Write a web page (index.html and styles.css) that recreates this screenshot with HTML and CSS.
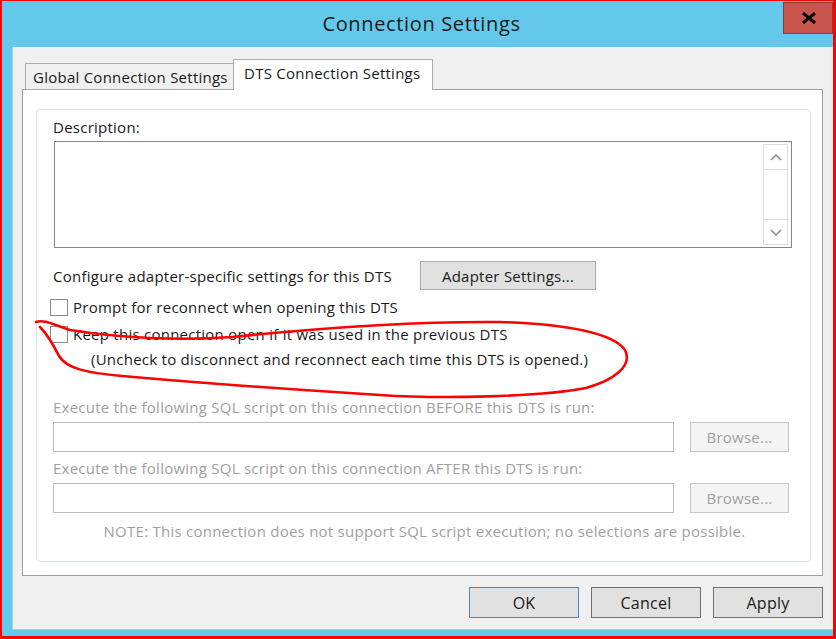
FILE: index.html
```html
<!DOCTYPE html>
<html>
<head>
<meta charset="utf-8">
<link rel="stylesheet" href="styles.css">
</head>
<body>
<div class="screen">
  <div class="titlebar">
    <div></div>
    <div class="title">Connection Settings</div>
    <div class="close-wrap">
      <div class="close">
        <svg width="16" height="12" viewBox="0 0 16 12"><path d="M2 1 L14 11 M14 1 L2 11" stroke="#000" stroke-width="3" stroke-linecap="butt"/></svg>
      </div>
    </div>
  </div>
  <div class="client">
    <div class="tabs">
      <div class="tab inactive">Global Connection Settings</div>
      <div class="tab active">DTS Connection Settings</div>
    </div>
    <div class="page">
      <div class="group">
        <div class="label desc">Description:</div>
        <div class="textarea">
          <div class="scrollbar">
            <div class="sb-btn">
              <svg width="12" height="7" viewBox="0 0 12 7"><path d="M1 6 L6 1 L11 6" fill="none" stroke="#8a8a8a" stroke-width="1.5"/></svg>
            </div>
            <div class="sb-track"></div>
            <div class="sb-btn">
              <svg width="12" height="7" viewBox="0 0 12 7"><path d="M1 1 L6 6 L11 1" fill="none" stroke="#8a8a8a" stroke-width="1.5"/></svg>
            </div>
          </div>
        </div>
        <div class="adapter-row">
          <div class="label">Configure adapter-specific settings for this DTS</div>
          <div class="btn adapter">Adapter Settings...</div>
        </div>
        <div class="check-row first">
          <div class="box"></div>
          <div class="label">Prompt for reconnect when opening this DTS</div>
        </div>
        <div class="check-row second">
          <div class="box"></div>
          <div class="label">Keep this connection open if it was used in the previous DTS</div>
        </div>
        <div class="label hint">(Uncheck to disconnect and reconnect each time this DTS is opened.)</div>
        <div class="label disabled before">Execute the following SQL script on this connection BEFORE this DTS is run:</div>
        <div class="sql-row">
          <div class="input"></div>
          <div class="btn browse">Browse...</div>
        </div>
        <div class="label disabled after">Execute the following SQL script on this connection AFTER this DTS is run:</div>
        <div class="sql-row">
          <div class="input"></div>
          <div class="btn browse">Browse...</div>
        </div>
        <div class="label disabled note">NOTE: This connection does not support SQL script execution; no selections are possible.</div>
      </div>
    </div>
    <div class="buttons">
      <div class="btn dlg ok">OK</div>
      <div class="btn dlg">Cancel</div>
      <div class="btn dlg">Apply</div>
    </div>
  </div>
  <svg class="scribble" width="836" height="639" viewBox="0 0 836 639">
    <path d="M36 322 C44 319 54 325 70 330 C120 338 180 341 232 337 C300 330 400 321 500 322 C570 324 614 334 625 350 C633 366 614 380 586 388 C540 397 440 399 380 395 C300 390 200 383 122 376 C86 373 66 368 59 356 C53 344 47 334 40 327" fill="none" stroke="#ff0000" stroke-width="2.6" stroke-linecap="round"/>
  </svg>
</div>
</body>
</html>
```
FILE: styles.css
```css
* { box-sizing: border-box; }
html, body { margin: 0; padding: 0; }
body {
  width: 836px;
  height: 639px;
  overflow: hidden;
  font-family: "Open Sans", "Noto Sans", sans-serif;
  font-size: 15px;
  letter-spacing: 0.25px;
  color: #1a1a1a;
}
.screen {
  position: relative;
  width: 836px;
  height: 639px;
  border-style: solid;
  border-color: #ff0000;
  border-width: 1px 3px 3px 2px;
  background: #63c8e9;
  display: flex;
  flex-direction: column;
}
.titlebar {
  height: 46px;
  display: grid;
  grid-template-columns: 1fr auto 1fr;
  align-items: start;
}
.title {
  font-size: 20px;
  letter-spacing: 0.65px;
  color: #1b1b1b;
  line-height: 26px;
  margin-top: 10px;
  padding-left: 8px;
}
.close-wrap { display: flex; justify-content: flex-end; }
.close {
  width: 50px;
  height: 32px;
  margin-top: 1px;
  margin-right: 0;
  background: #c8564d;
  border: 1px solid #8d3d37;
  display: flex;
  align-items: center;
  justify-content: center;
  padding-left: 1px;
}
.client {
  margin: 0 0 6px 10px;
  flex: 1;
  background: #f0f0f0;
  border-left: 1px solid #a9cfdc;
  border-bottom: 1px solid #a9cfdc;
  display: flex;
  flex-direction: column;
  padding: 12px 10px 0 9px;
}
.tabs {
  display: flex;
  align-items: flex-end;
  padding-left: 3px;
  height: 31px;
  position: relative;
  z-index: 1;
  margin-bottom: -1px;
}
.tab {
  border: 1px solid #adadad;
  border-bottom: none;
  white-space: nowrap;
}
.tab.inactive {
  height: 27px;
  width: 208px;
  background: #f0f0f0;
  padding-left: 7px;
  line-height: 27px;
  border-right: none;
  border-bottom: 1px solid #adadad;
}
.tab.active {
  height: 31px;
  width: 200px;
  background: #ffffff;
  padding-left: 10px;
  line-height: 27px;
}
.page {
  height: 487px;
  background: #ffffff;
  border: 1px solid #a0a0a0;
  padding: 19px 11px 13px 13px;
}
.group {
  height: 100%;
  border: 1px solid #dbe3ea;
  border-radius: 4px;
  padding: 0 0 0 16px;
  display: flex;
  flex-direction: column;
}
.label { line-height: 20px; white-space: nowrap; }
.desc { margin-top: 7px; }
.textarea {
  margin-top: 4px;
  margin-left: 1px;
  width: 738px;
  height: 107px;
  border: 1px solid #858585;
  display: flex;
  justify-content: flex-end;
  padding: 2px 3px 2px 0;
}
.scrollbar {
  width: 25px;
  border: 1px solid #dcdcdc;
  display: flex;
  flex-direction: column;
}
.sb-btn {
  height: 24px;
  display: flex;
  align-items: center;
  justify-content: center;
}
.sb-track {
  flex: 1;
  border-top: 1px solid #dcdcdc;
  border-bottom: 1px solid #dcdcdc;
}
.btn {
  background: #e1e1e1;
  border: 1px solid #adadad;
  display: flex;
  align-items: center;
  justify-content: center;
  white-space: nowrap;
}
.adapter-row {
  margin-top: 13px;
  display: flex;
  align-items: center;
  height: 29px;
}
.adapter-row .label { width: 367px; }
.adapter { width: 176px; height: 29px; }
.check-row {
  display: flex;
  align-items: center;
  height: 18px;
  margin-left: -3px;
}
.check-row.first { margin-top: 8px; }
.check-row.second { margin-top: 9px; }
.box {
  width: 18px;
  height: 17px;
  border: 1px solid #8a8a8a;
  background: #fff;
  margin-right: 5px;
}
.hint { margin-left: 38px; margin-top: 6px; }
.disabled { color: #a0a0a0; }
.before { margin-top: 28px; }
.after { margin-top: 6px; }
.sql-row {
  display: flex;
  align-items: center;
  height: 30px;
  margin-top: 5px;
}
.input {
  width: 621px;
  height: 30px;
  border: 1px solid #bcbcbc;
  background: #fff;
}
.browse {
  margin-left: 16px;
  width: 99px;
  height: 30px;
  background: #f4f4f4;
  border-color: #c6c6c6;
  color: #a0a0a0;
}
.note { margin-top: 8px; text-align: center; padding-right: 14px; }
.buttons {
  display: flex;
  justify-content: flex-end;
  gap: 12px;
  margin-top: 11px;
}
.dlg {
  width: 110px;
  height: 31px;
  border: 1px solid #707070;
  font-size: 16px;
}
.dlg.ok { border-color: #3c8ac7; }
.scribble {
  position: absolute;
  left: -2px;
  top: -1px;
  pointer-events: none;
}
```
